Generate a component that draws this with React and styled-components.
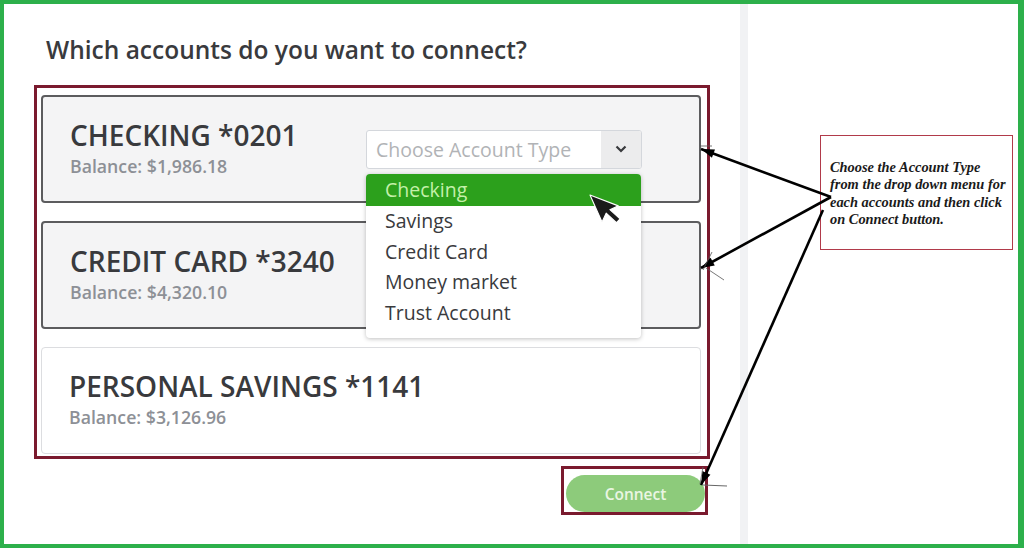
import React from 'react'
import styled, { createGlobalStyle } from 'styled-components'

const GlobalStyle = createGlobalStyle`
  html, body { margin: 0; padding: 0; background: #fff; }
  body { font-family: "Open Sans", Lato, sans-serif; }
  * { box-sizing: border-box; }
`

const Frame = styled.div`
  position: relative;
  width: 1024px;
  height: 548px;
  border: 4px solid #2db04b;
  border-right-width: 6px;
  display: flex;
  background: #fff;
  overflow: hidden;
`

const Left = styled.div`
  width: 736px;
  padding: 31px 0 0 30px;
  display: flex;
  flex-direction: column;
`

const Divider = styled.div`
  width: 8px;
  background: #f1f2f4;
`

const Right = styled.div`
  flex: 1;
  padding: 131px 5px 0 72px;
`

const Heading = styled.h2`
  margin: 0 0 20px 12px;
  font-size: 24.5px;
  line-height: 30px;
  font-weight: 600;
  color: #393a3d;
`

const Highlight = styled.div`
  border: 3px solid #7a1a2e;
  width: ${p => p.width}px;
  padding: ${p => p.pad};
`

const CardList = styled.div`
  display: flex;
  flex-direction: column;
  gap: 18px;
`

const Card = styled.div`
  position: relative;
  height: ${p => p.h}px;
  display: flex;
  align-items: center;
  justify-content: space-between;
  padding: 0 57px 0 27px;
  border-radius: 4px;
  background: ${p => (p.active ? '#f4f4f5' : '#fff')};
  border: ${p => (p.active ? '2px solid #5c5c5e' : '1.5px solid #dcdde0')};
`

const Info = styled.div`
  display: flex;
  flex-direction: column;
  margin-top: -3px;
`

const Title = styled.div`
  font-size: 28px;
  line-height: 32px;
  font-weight: 600;
  color: #393a3d;
`

const Balance = styled.div`
  margin-top: 4px;
  font-size: 17.7px;
  line-height: 22px;
  font-weight: 600;
  color: #8d9096;
`

const SelectWrap = styled.div`
  position: relative;
  width: 276px;
`

const Select = styled.div`
  height: 39px;
  display: flex;
  border: 1.5px solid #d4d7dc;
  border-radius: 3px;
  background: #fff;
  overflow: hidden;
`

const Placeholder = styled.div`
  flex: 1;
  padding-left: 9px;
  display: flex;
  align-items: center;
  font-size: 19.5px;
  color: #b1b3b6;
`

const Chevron = styled.div`
  width: 40px;
  display: flex;
  align-items: center;
  justify-content: center;
  background: #ececed;
`

const Menu = styled.div`
  position: absolute;
  top: 44px;
  left: 0;
  width: 275px;
  height: 164px;
  background: #fff;
  border-radius: 4px;
  box-shadow: 0 1px 4px rgba(0, 0, 0, 0.25);
  overflow: hidden;
  z-index: 2;
`

const Option = styled.div`
  height: ${p => (p.selected ? 32 : 30.5)}px;
  display: flex;
  align-items: center;
  padding-left: 19px;
  font-size: 19.5px;
  color: ${p => (p.selected ? '#c4f0aa' : '#393a3d')};
  background: ${p => (p.selected ? '#2ca01c' : '#fff')};
`

const ButtonRow = styled.div`
  display: flex;
  justify-content: flex-end;
  width: 674px;
  margin-top: 7px;
`

const ConnectButton = styled.button`
  width: 139px;
  height: 37px;
  border: none;
  border-radius: 19px;
  background: #8dcb7b;
  color: #eaf6e3;
  font-family: "Open Sans", sans-serif;
  font-size: 15.5px;
  font-weight: 600;
`

const Note = styled.div`
  height: 115px;
  border: 1px solid #b13a4a;
  padding: 23px 0 0 9px;
  font-family: "Liberation Serif", "Times New Roman", serif;
  font-style: italic;
  font-weight: 700;
  font-size: 14.4px;
  line-height: 17.3px;
  color: #1a1a1a;
  white-space: nowrap;
`

const Overlay = styled.svg`
  position: absolute;
  left: -4px;
  top: -4px;
  width: 1024px;
  height: 548px;
  pointer-events: none;
  z-index: 5;
`

const accounts = [
  { name: 'CHECKING *0201', balance: '$1,986.18', active: true, select: true },
  { name: 'CREDIT CARD *3240', balance: '$4,320.10', active: true },
  { name: 'PERSONAL SAVINGS *1141', balance: '$3,126.96' },
]

const types = ['Checking', 'Savings', 'Credit Card', 'Money market', 'Trust Account']

function Arrow({ x1, y1, x2, y2 }) {
  const a = Math.atan2(y1 - y2, x1 - x2)
  const l = 14
  const s = 0.32
  const p1 = [x2 + l * Math.cos(a + s), y2 + l * Math.sin(a + s)]
  const p2 = [x2 + l * Math.cos(a - s), y2 + l * Math.sin(a - s)]
  return (
    <g>
      <line x1={x1} y1={y1} x2={x2} y2={y2} stroke="#000" strokeWidth="2.6" />
      <polygon points={`${x2},${y2} ${p1[0]},${p1[1]} ${p2[0]},${p2[1]}`} fill="#000" />
    </g>
  )
}

function Cursor() {
  return (
    <g transform="translate(590 195) rotate(-24) scale(1.85)">
      <path
        d="M0 0 L0 16 L4 12.5 L7 19.5 L9.6 18.4 L6.6 11.6 L11.6 11.6 Z"
        fill="#1a1a1a"
        stroke="#fff"
        strokeWidth="0.6"
        strokeLinejoin="round"
      />
    </g>
  )
}

export default function App() {
  return (
    <>
      <GlobalStyle />
      <Frame>
        <Left>
          <Heading>Which accounts do you want to connect?</Heading>
          <Highlight width={676} pad="7px 6px 2px 4px">
            <CardList>
              {accounts.map((acc, i) => (
                <Card key={acc.name} active={acc.active} h={i === 2 ? 107 : 108}>
                  <Info>
                    <Title>{acc.name}</Title>
                    <Balance>Balance: {acc.balance}</Balance>
                  </Info>
                  {acc.select && (
                    <SelectWrap>
                      <Select>
                        <Placeholder>Choose Account Type</Placeholder>
                        <Chevron>
                          <svg width="12" height="8" viewBox="0 0 12 8">
                            <path d="M1.5 1.5 L6 6 L10.5 1.5" fill="none" stroke="#393a3d" strokeWidth="2.2" />
                          </svg>
                        </Chevron>
                      </Select>
                      <Menu>
                        {types.map((t, j) => (
                          <Option key={t} selected={j === 0}>{t}</Option>
                        ))}
                      </Menu>
                    </SelectWrap>
                  )}
                </Card>
              ))}
            </CardList>
          </Highlight>
          <ButtonRow>
            <Highlight width={147} pad="6px 0 0 2px">
              <ConnectButton>Connect</ConnectButton>
            </Highlight>
          </ButtonRow>
        </Left>
        <Divider />
        <Right>
          <Note>
            Choose the Account Type<br />
            from the drop down menu for<br />
            each accounts and then click<br />
            on Connect button.
          </Note>
        </Right>
        <Overlay viewBox="0 0 1024 548">
          <Arrow x1={831} y1={197} x2={701} y2={149} />
          <Arrow x1={831} y1={197} x2={701} y2={268} />
          <Arrow x1={823} y1={210} x2={701} y2={485} />
          <line x1={706} y1={268} x2={724} y2={280} stroke="#555" strokeWidth="0.8" />
          <line x1={712} y1={252} x2={703} y2={270} stroke="#555" strokeWidth="0.8" />
          <line x1={703} y1={467} x2={700} y2={484} stroke="#666" strokeWidth="0.8" />
          <line x1={703} y1={485} x2={727} y2={486} stroke="#666" strokeWidth="1" />
          <line x1={700} y1={146} x2={712} y2={146} stroke="#555" strokeWidth="0.8" />
          <Cursor />
        </Overlay>
      </Frame>
    </>
  )
}
